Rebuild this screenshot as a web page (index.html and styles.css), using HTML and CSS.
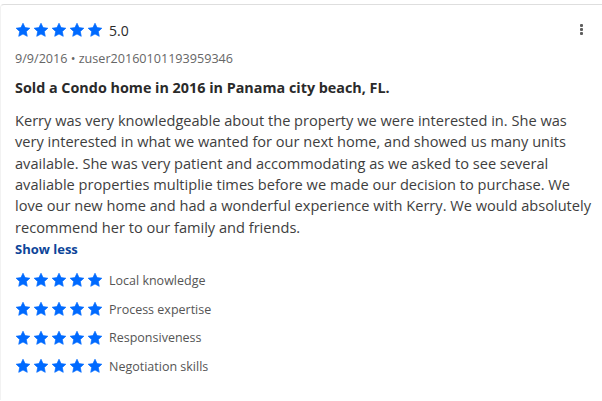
FILE: index.html
```html
<!DOCTYPE html>
<html>
<head>
<meta charset="utf-8">
<link rel="stylesheet" href="styles.css">
</head>
<body>
<svg width="0" height="0" class="defs">
  <defs>
    <symbol id="star" viewBox="0 0 24 24"><path d="M12 1.8l3.1 6.6 7.2.9-5.3 5 1.4 7.2L12 18 5.6 21.5 7 14.3l-5.3-5 7.2-.9z" stroke-linejoin="round"/></symbol>
  </defs>
</svg>
<div class="card">
  <div class="head">
    <div class="rating">
      <span class="stars">
        <svg class="star"><use href="#star"/></svg><svg class="star"><use href="#star"/></svg><svg class="star"><use href="#star"/></svg><svg class="star"><use href="#star"/></svg><svg class="star"><use href="#star"/></svg>
      </span>
      <span class="score">5.0</span>
    </div>
    <button class="more" aria-label="More"><span></span><span></span><span></span></button>
  </div>
  <div class="meta">9/9/2016 • zuser20160101193959346</div>
  <h3 class="title">Sold a Condo home in 2016 in Panama city beach, FL.</h3>
  <p class="body">Kerry was very knowledgeable about the property we were interested in. She was very interested in what we wanted for our next home, and showed us many units available. She was very patient and accommodating as we asked to see several avaliable properties multiplie times before we made our decision to purchase. We love our new home and had a wonderful experience with Kerry. We would absolutely recommend her to our family and friends.</p>
  <a class="toggle" href="#">Show less</a>
  <ul class="subs">
    <li><span class="stars"><svg class="star"><use href="#star"/></svg><svg class="star"><use href="#star"/></svg><svg class="star"><use href="#star"/></svg><svg class="star"><use href="#star"/></svg><svg class="star"><use href="#star"/></svg></span><span class="label">Local knowledge</span></li>
    <li><span class="stars"><svg class="star"><use href="#star"/></svg><svg class="star"><use href="#star"/></svg><svg class="star"><use href="#star"/></svg><svg class="star"><use href="#star"/></svg><svg class="star"><use href="#star"/></svg></span><span class="label">Process expertise</span></li>
    <li><span class="stars"><svg class="star"><use href="#star"/></svg><svg class="star"><use href="#star"/></svg><svg class="star"><use href="#star"/></svg><svg class="star"><use href="#star"/></svg><svg class="star"><use href="#star"/></svg></span><span class="label">Responsiveness</span></li>
    <li><span class="stars"><svg class="star"><use href="#star"/></svg><svg class="star"><use href="#star"/></svg><svg class="star"><use href="#star"/></svg><svg class="star"><use href="#star"/></svg><svg class="star"><use href="#star"/></svg></span><span class="label">Negotiation skills</span></li>
  </ul>
</div>
</body>
</html>
```
FILE: styles.css
```css
html, body { margin: 0; padding: 0; background: #fff; }
body { font-family: "Open Sans", "Noto Sans", sans-serif; color: #2a2a2a; }
.defs { position: absolute; width: 0; height: 0; }
.card {
  margin-top: 4px;
  border-top: 1px solid #dedede;
  border-left: 1px solid #f2f2f2;
  border-top-left-radius: 4px;
  padding: 14px 6px 0 14px;
  height: 396px;
  box-sizing: border-box;
}
.head { display: flex; justify-content: space-between; align-items: center; height: 22px; }
.rating { display: flex; align-items: center; }
.stars { display: inline-flex; gap: 2px; }
.star { width: 16px; height: 16px; fill: #006aff; stroke: #006aff; stroke-width: 1; }
.score { margin-left: 6px; font-size: 14px; color: #2a2a2a; }
.more { display: flex; flex-direction: column; gap: 1px; padding: 0; margin: -2px 13px 0 0; border: 0; background: none; }
.more span { width: 3px; height: 3px; background: #5e5e5e; border-radius: 1px; }
.meta { margin-top: 9px; font-size: 12.6px; color: #666; line-height: 18px; }
.title { margin: 10px 0 0; font-size: 14.35px; font-weight: 700; line-height: 20px; color: #2a2a2a; }
.body { margin: 12px 0 0; font-size: 14.6px; line-height: 21.35px; color: #3e3e3e; }
.toggle { display: block; margin-top: 2px; font-size: 13px; font-weight: 700; color: #0d4599; text-decoration: none; line-height: 18px; }
.subs { list-style: none; margin: 8px 0 0; padding: 0; }
.subs li { display: flex; align-items: center; height: 28.7px; }
.label { margin-left: 6px; font-size: 12.5px; color: #555; }
```
